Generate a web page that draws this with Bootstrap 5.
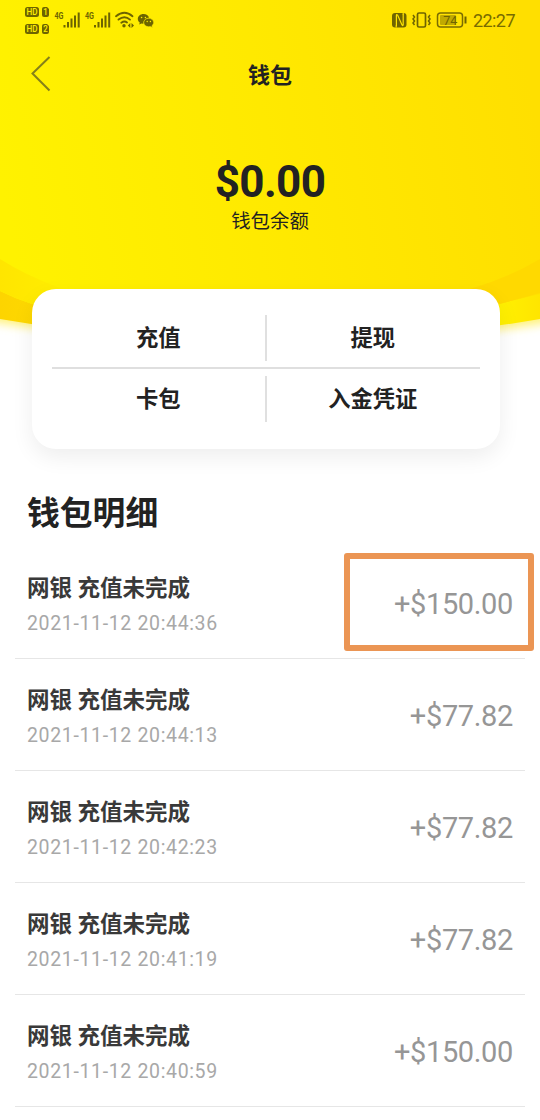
<!DOCTYPE html>
<html lang="zh-CN">
<head>
<meta charset="utf-8">
<meta name="viewport" content="width=device-width, initial-scale=1">
<title>钱包</title>
<link href="https://cdn.jsdelivr.net/npm/bootstrap@5.3.0/dist/css/bootstrap.min.css" rel="stylesheet">
<style>
  html, body { height: 1120px; overflow: hidden; }
  body { font-family: Roboto, "Noto Sans CJK SC", sans-serif; color: #222; background: #fff; }
  .hero { height: 289px; z-index: 0; }
  .hero-bg { z-index: -1; width: 540px; height: 350px; }
  .status { height: 40px; padding: 0 25px 0 24px; }
  .clock { font-size: 18px; line-height: 20px; color: #786c00; letter-spacing: -.55px; padding-top: 2px; }
  .title-bar { height: 68px; padding-left: 30px; padding-right: 30px; }
  .page-title { font-size: 22px; line-height: 32px; padding: 3px 21px 0 0; }
  .balance { font-size: 44px; line-height: 50px; letter-spacing: -.6px; padding-top: 49px; }
  .balance-label { font-size: 19.4px; line-height: 28px; padding-top: 1px; }
  .actions { width: 468px; height: 160px; margin-left: 32px; border-radius: 24px; padding: 16px 20px 0; box-shadow: 0 8px 22px rgba(0,0,0,.07); }
  .action { font-size: 22.3px; line-height: 64px; padding-right: 1px; }
  .action-row { height: 62px; }
  .action-row:first-child { padding-top: 4px; }
  .action-row + .action-row { border-top: 2px solid #dfdfdf; }
  .split { width: 2px; height: 46px; margin-left: -1px; background: #e0e0e0; }
  .section-title { font-size: 32.8px; line-height: 44px; margin: 43px 0 0 27px; color: #222; }
  .records { margin: 11px 15px 0; }
  .record { height: 112px; border-bottom: 1px solid #e6e6e6; padding: 0 12px 0 12px; }
  .record-name { font-size: 22.5px; line-height: 32px; color: #393939; margin-top: 25px; }
  .record-time { font-size: 19.5px; line-height: 26px; margin-top: 7px; color: #a8a8a8; letter-spacing: .65px; }
  .record-sum { font-size: 29px; line-height: 36px; color: #969696; letter-spacing: -.35px; padding-top: 3px; }
  .marker { left: 329px; top: 6px; width: 190px; height: 98px; border: 6px solid #eb9554; border-radius: 3px; }
</style>
</head>
<body>
<header class="hero position-relative">
  <svg class="hero-bg position-absolute top-0 start-0" viewBox="0 0 540 350" aria-hidden="true">
    <defs>
      <linearGradient id="sun" gradientUnits="userSpaceOnUse" x1="0" y1="180" x2="530" y2="80"><stop offset="0" stop-color="#fff200"/><stop offset=".5" stop-color="#ffe900"/><stop offset="1" stop-color="#ffdf00"/></linearGradient>
      <linearGradient id="rim" x1="0" y1="0" x2="1" y2="0"><stop offset="0" stop-color="#fdd400"/><stop offset=".3" stop-color="#ffe800"/><stop offset=".93" stop-color="#fff000"/><stop offset="1" stop-color="#ffe500"/></linearGradient>
      <linearGradient id="fold" x1="0" y1="0" x2="1" y2="0"><stop offset="0" stop-color="#ffe500"/><stop offset="1" stop-color="#ffee00"/></linearGradient>
      <filter id="soft" x="-10%" y="-10%" width="120%" height="120%"><feGaussianBlur stdDeviation="5"/></filter>
    </defs>
    <path d="M-20 0H560V321Q270 368-20 320Z" fill="#fff27a" filter="url(#soft)"/>
    <path d="M0 0H540V319Q270 365 0 319Z" fill="url(#rim)"/>
    <path d="M0 0H540V294Q500 304 440 316L32 304Q16 299 0 291Z" fill="url(#sun)"/>
    <path d="M540 259Q510 277 470 289L500 304L540 293Z" fill="#ffd900"/>
    <path d="M0 259Q25 275 60 288L32 304Q16 299 0 291Z" fill="url(#fold)"/>
  </svg>
  <div class="status d-flex align-items-center justify-content-between">
    <svg width="132" height="36" viewBox="24 2 132 36" fill="#6d6400" aria-hidden="true">
      <g font-family="Roboto" font-weight="700" font-size="9">
        <rect x="25" y="7" width="14" height="10" rx="2.5"/><path d="M44 7h3l2 2v6q0 2-2 2h-3q-2 0-2-2v-6q0-2 2-2z"/>
        <rect x="25" y="24" width="14" height="10" rx="2.5"/><path d="M44 24h3l2 2v6q0 2-2 2h-3q-2 0-2-2v-6q0-2 2-2z"/>
        <g fill="#ffef00" font-weight="500"><text x="26.500" y="15.200" textLength="11" lengthAdjust="spacingAndGlyphs">HD</text><text x="43.200" y="15.200" textLength="4.500" lengthAdjust="spacingAndGlyphs">1</text><text x="26.500" y="32.200" textLength="11" lengthAdjust="spacingAndGlyphs">HD</text><text x="43.300" y="32.200" textLength="4.500" lengthAdjust="spacingAndGlyphs">2</text></g>
        <text x="54.500" y="18.500" textLength="9" lengthAdjust="spacingAndGlyphs">4G</text>
        <text x="85" y="18.500" textLength="9" lengthAdjust="spacingAndGlyphs">4G</text>
      </g>
      <g id="bars"><path d="M63.500 25h2v2.500h-2zM67 22h2v5.500h-2zM70.500 18.500h2v9h-2zM74 15.500h2v12h-2zM77.700 12.500h2v15h-2z"/></g>
      <use href="#bars" x="30.500"/>
      <g fill="none" stroke="#6d6400" stroke-width="1.900" stroke-linecap="round"><path d="M116 16.200Q124.500 9.300 132.500 16.200M118.500 19.600Q124.500 14.800 130 19.600M121.300 22.700Q124.500 20.500 127 22.500"/></g>
      <circle cx="124" cy="25.800" r="1.700"/><path d="M130.300 23v5l-2.500-2.500zM131.500 23v5l2.500-2.500z"/>
      <path d="M143.500 14c-3.300 0-5.700 2.200-5.700 4.900 0 1.500.8 2.800 2 3.700l-.6 2 2.300-1.200 2 .3c-.3-3.500 2.300-6 5.600-6-.6-2.200-2.800-3.700-5.600-3.700z"/>
      <path d="M148.700 18.300c-2.900 0-4.900 1.900-4.900 4.200s2.100 4.200 4.900 4.200l1.700-.3 2 1-.5-1.700c1-.8 1.700-1.900 1.700-3.200 0-2.300-2.100-4.200-4.900-4.200z" stroke="#ffed00" stroke-width=".5"/>
      <g fill="#ffed00"><circle cx="141.600" cy="17.500" r=".8"/><circle cx="145.400" cy="17.500" r=".8"/><circle cx="147.200" cy="21.500" r=".7"/><circle cx="150.400" cy="21.500" r=".7"/></g>
    </svg>
    <div class="d-flex align-items-center">
      <svg width="82" height="30" viewBox="391 5 82 30" fill="#6f6400" aria-hidden="true">
        <rect x="392" y="13" width="14.500" height="14.500" rx="3"/>
        <path d="M396.400 26v-10.500q0-1.500 1.200-.4l4.400 9.800q1.200 1.500 1.200-.4v-10" fill="none" stroke="#ffe400" stroke-width="1.200"/>
        <path d="M396.200 27.500v-2M403.200 13v2" stroke="#ffe400" stroke-width="1.200"/>
        <rect x="417.500" y="13" width="8" height="14" rx="1.500" fill="none" stroke="#6f6400" stroke-width="1.700"/>
        <path d="M413 15l1.500 2-1.500 2 1.500 2-1.500 2 1.500 2M430 15l-1.500 2 1.500 2-1.500 2 1.500 2-1.500 2" fill="none" stroke="#6f6400" stroke-width="1.500"/>
        <rect x="437.500" y="13" width="25" height="14" rx="3" fill="none" stroke="#7b6d00" stroke-width="1.500"/>
        <rect x="440" y="15" width="16" height="10" rx="1" fill="#c0aa00"/>
        <path d="M464.500 16.500h2v7h-2z"/>
        <text x="443.300" y="24.500" font-family="Roboto" font-size="12.500">74</text>
      </svg>
      <span class="clock">22:27</span>
    </div>
  </div>
  <nav class="title-bar position-relative d-flex align-items-center">
    <svg width="21" height="36" viewBox="0 0 21 36" fill="none" stroke="#858019" stroke-width="2" aria-label="返回"><path d="M19.500 1L2.500 17.500L19.500 34.500"/></svg>
    <h1 class="page-title fw-bold mb-0 flex-fill text-center">钱包</h1>
  </nav>
  <div class="text-center">
    <div class="balance fw-bold">$0.00</div>
    <div class="balance-label">钱包余额</div>
  </div>
</header>
<main>
  <section class="actions bg-white position-relative">
    <div class="action-row d-flex align-items-center"><a class="action fw-bold text-reset text-decoration-none text-center flex-fill w-50">充值</a><i class="split flex-shrink-0"></i><a class="action fw-bold text-reset text-decoration-none text-center flex-fill w-50">提现</a></div>
    <div class="action-row d-flex align-items-center"><a class="action fw-bold text-reset text-decoration-none text-center flex-fill w-50">卡包</a><i class="split flex-shrink-0"></i><a class="action fw-bold text-reset text-decoration-none text-center flex-fill w-50">入金凭证</a></div>
  </section>
  <h2 class="section-title fw-bold">钱包明细</h2>
  <div class="records">
    <div class="record position-relative d-flex justify-content-between align-items-center"><div class="align-self-start"><div class="record-name fw-bold">网银 充值未完成</div><div class="record-time">2021-11-12 20:44:36</div></div><div class="record-sum">+$150.00</div><div class="marker position-absolute"></div></div>
    <div class="record d-flex justify-content-between align-items-center"><div class="align-self-start"><div class="record-name fw-bold">网银 充值未完成</div><div class="record-time">2021-11-12 20:44:13</div></div><div class="record-sum">+$77.82</div></div>
    <div class="record d-flex justify-content-between align-items-center"><div class="align-self-start"><div class="record-name fw-bold">网银 充值未完成</div><div class="record-time">2021-11-12 20:42:23</div></div><div class="record-sum">+$77.82</div></div>
    <div class="record d-flex justify-content-between align-items-center"><div class="align-self-start"><div class="record-name fw-bold">网银 充值未完成</div><div class="record-time">2021-11-12 20:41:19</div></div><div class="record-sum">+$77.82</div></div>
    <div class="record d-flex justify-content-between align-items-center"><div class="align-self-start"><div class="record-name fw-bold">网银 充值未完成</div><div class="record-time">2021-11-12 20:40:59</div></div><div class="record-sum">+$150.00</div></div>
  </div>
</main>
<script src="https://cdn.jsdelivr.net/npm/bootstrap@5.3.0/dist/js/bootstrap.bundle.min.js"></script>
</body>
</html>
